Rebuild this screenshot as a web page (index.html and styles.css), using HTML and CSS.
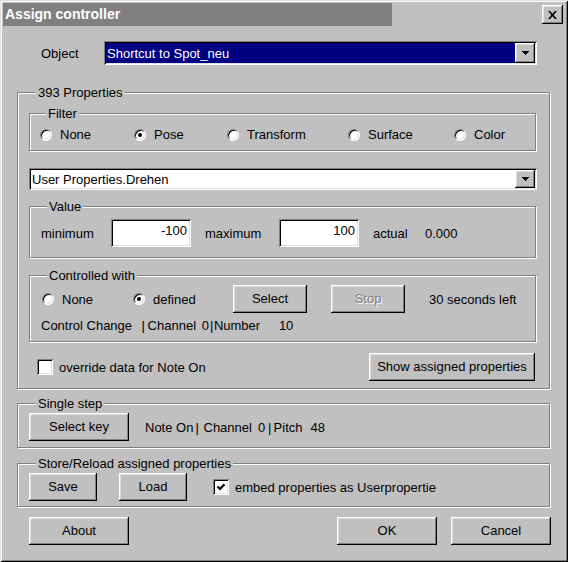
FILE: index.html
```html
<!DOCTYPE html>
<html lang="en">
<head>
<meta charset="utf-8">
<title>Assign controller</title>
<link rel="stylesheet" href="styles.css">
</head>
<body>
<div class="window">
  <div class="titlebar">
    <div class="title">Assign controller</div>
    <button class="close" type="button" aria-label="Close">
      <svg width="9" height="8" viewBox="0 0 9 8"><path d="M0 0H2L4.5 2.8L7 0H9L5.6 4L9 8H7L4.5 5.2L2 8H0L3.4 4Z"/></svg>
    </button>
  </div>
  <div class="content">
    <div class="object-row">
      <span class="object-label">Object</span>
      <div class="combo combo-object">
        <span class="combo-text selected">Shortcut to Spot_neu</span>
        <span class="drop"><svg width="7" height="4" viewBox="0 0 7 4"><path d="M0 0H7V1H6V2H5V3H4V4H3V3H2V2H1V1H0Z"/></svg></span>
      </div>
    </div>

    <div class="group props">
      <div class="legend">393 Properties</div>

      <div class="group sub filter">
        <div class="legend">Filter</div>
        <div class="filter-radios">
          <span class="radio"><span class="dot"></span>None</span>
          <span class="radio"><span class="dot on"></span>Pose</span>
          <span class="radio"><span class="dot"></span>Transform</span>
          <span class="radio"><span class="dot"></span>Surface</span>
          <span class="radio"><span class="dot"></span>Color</span>
        </div>
      </div>

      <div class="combo combo-user">
        <span class="combo-text">User Properties.Drehen</span>
        <span class="drop"><svg width="7" height="4" viewBox="0 0 7 4"><path d="M0 0H7V1H6V2H5V3H4V4H3V3H2V2H1V1H0Z"/></svg></span>
      </div>

      <div class="group sub value">
        <div class="legend">Value</div>
        <div class="value-row">
          <span>minimum</span>
          <span class="edit">-100</span>
          <span>maximum</span>
          <span class="edit">100</span>
          <span>actual</span>
          <span>0.000</span>
        </div>
      </div>

      <div class="group sub controlled">
        <div class="legend">Controlled with</div>
        <div class="ctrl-row">
          <span class="radio"><span class="dot"></span>None</span>
          <span class="radio"><span class="dot on"></span>defined</span>
          <span><button class="btn btn-sm" type="button">Select</button></span>
          <span><button class="btn btn-sm disabled" type="button" disabled>Stop</button></span>
          <span>30 seconds left</span>
        </div>
        <div class="info cc-info">
          <span>Control Change</span><span>|</span><span>Channel</span><span>0</span><span>|</span><span>Number</span><span>10</span>
        </div>
      </div>

      <div class="override-row">
        <span class="check"></span>
        <span class="check-label">override data for Note On</span>
        <button class="btn btn-show" type="button">Show assigned properties</button>
      </div>
    </div>

    <div class="group single">
      <div class="legend">Single step</div>
      <div class="single-row">
        <button class="btn btn-key" type="button">Select key</button>
        <div class="info note-info">
          <span>Note On</span><span>|</span><span>Channel</span><span>0</span><span>|</span><span>Pitch</span><span>48</span>
        </div>
      </div>
    </div>

    <div class="group store">
      <div class="legend">Store/Reload assigned properties</div>
      <div class="store-row">
        <button class="btn btn-save" type="button">Save</button>
        <button class="btn btn-load" type="button">Load</button>
        <span class="check"><svg width="10" height="10" viewBox="0 0 10 10"><polyline points="1.5,4.5 4,7 8.5,2.2" fill="none" stroke="#000" stroke-width="2.2"/></svg></span>
        <span class="check-label">embed properties as Userpropertie</span>
      </div>
    </div>

    <div class="bottom-row">
      <button class="btn" type="button">About</button>
      <button class="btn btn-ok" type="button">OK</button>
      <button class="btn btn-cancel" type="button">Cancel</button>
    </div>
  </div>
</div>
</body>
</html>
```

FILE: styles.css
```css
* { box-sizing: border-box; }
html, body { margin: 0; padding: 0; }
body {
  background: #c0c0c0;
  font-family: "Liberation Sans", Arial, sans-serif;
  font-size: 13px;
  line-height: 15px;
  color: #000;
}
button {
  font: inherit;
  color: inherit;
  border: 0;
  margin: 0;
  padding: 0;
  background: none;
}

.window {
  width: 568px;
  height: 562px;
  padding: 3px;
  background: #c0c0c0;
  box-shadow: inset 1px 1px 0 #dfdfdf, inset -1px -1px 0 #000, inset 2px 2px 0 #fff, inset -2px -2px 0 #808080;
  display: flex;
  flex-direction: column;
}

.titlebar { display: flex; height: 23px; flex: none; }
.title {
  width: 389px;
  background: #808080;
  color: #fff;
  font-weight: bold;
  font-size: 14px;
  padding: 4px 0 0 2px;
}
.close {
  margin: 2px 2px 0 auto;
  width: 21px;
  height: 19px;
  display: flex;
  align-items: center;
  justify-content: center;
}

.btn, .close, .drop {
  background: #c0c0c0;
  box-shadow: inset -1px -1px 0 #000, inset 1px 1px 0 #fff, inset -2px -2px 0 #808080, inset 2px 2px 0 #dfdfdf;
}
.btn { height: 28px; text-align: center; padding-bottom: 1px; }
.disabled { color: #808080; text-shadow: 1px 1px 0 #fff; }

.content { flex: 1; padding: 15px 15px 0 14px; }

.object-row { display: flex; align-items: center; height: 24px; }
.object-label { margin-left: 24px; width: 63px; }

.combo {
  display: flex;
  background: #fff;
  padding: 2px;
  box-shadow: inset 1px 1px 0 #808080, inset -1px -1px 0 #fff, inset 2px 2px 0 #000, inset -2px -2px 0 #dfdfdf;
}
.combo-object { width: 433px; height: 24px; }
.combo-user { height: 22px; margin-top: 17px; }
.combo-text { flex: 1; padding-left: 1px; display: flex; align-items: center; white-space: nowrap; }
.selected { background: #000080; color: #fff; }
.drop { width: 20px; flex: none; display: flex; align-items: center; justify-content: center; }

.group {
  border: 1px solid #808080;
  box-shadow: 1px 1px 0 #fff, inset 1px 1px 0 #fff;
}
.legend {
  width: max-content;
  margin: -8px 0 0 7px;
  padding: 0 2px;
  background: #c0c0c0;
}
.sub > .legend { margin-left: 6px; }

.props { margin-top: 27px; padding: 0 12px 7px 11px; }

.filter { margin: 13px 1px 0 0; padding: 0 0 8px 10px; }
.filter-radios {
  margin-top: 6px;
  display: grid;
  grid-template-columns: 94px 93px 121px 106px auto;
  align-items: center;
  height: 15px;
}

.radio { display: flex; align-items: center; gap: 8px; white-space: nowrap; }
.dot {
  position: relative;
  flex: none;
  width: 12px;
  height: 12px;
  border-radius: 50%;
  background: #fff;
  border: 1px solid;
  border-color: #808080 #fff #fff #808080;
  box-shadow: inset 1px 1px 0 #000, inset -1px -1px 0 #dfdfdf;
}
.dot.on::after {
  content: "";
  position: absolute;
  left: 3px;
  top: 3px;
  width: 4px;
  height: 4px;
  border-radius: 50%;
  background: #000;
}

.value { margin: 16px 1px 0 0; padding: 0 0 10px 11px; }
.value-row {
  margin-top: 5px;
  display: grid;
  grid-template-columns: 70px 94px 74px 94px 52px auto;
  align-items: center;
  height: 28px;
}
.edit {
  width: 80px;
  height: 28px;
  background: #fff;
  text-align: right;
  padding: 4px 4px 0 0;
  box-shadow: inset 1px 1px 0 #808080, inset -1px -1px 0 #fff, inset 2px 2px 0 #000, inset -2px -2px 0 #dfdfdf;
}

.controlled { margin: 17px 1px 0 0; padding: 0 0 8px 11px; }
.ctrl-row {
  margin-top: 2px;
  padding-left: 1px;
  display: grid;
  grid-template-columns: 91px 100px 98px 98px auto;
  align-items: center;
  height: 28px;
}
.btn-sm { width: 74px; display: block; }

.info { display: flex; white-space: pre; }
.info > span { flex: none; }
.cc-info { margin-top: 5px; }
.cc-info > span:nth-child(1) { width: 100.6px; }
.cc-info > span:nth-child(2) { width: 6px; }
.cc-info > span:nth-child(3) { width: 54.1px; }
.cc-info > span:nth-child(4) { width: 8.2px; }
.cc-info > span:nth-child(5) { width: 4px; }
.cc-info > span:nth-child(6) { width: 65px; }

.override-row { display: flex; align-items: center; height: 28px; margin-top: 11px; }
.check {
  flex: none;
  width: 16px;
  height: 16px;
  background: #fff;
  display: flex;
  align-items: center;
  justify-content: center;
  box-shadow: inset 1px 1px 0 #808080, inset -1px -1px 0 #fff, inset 2px 2px 0 #000, inset -2px -2px 0 #dfdfdf;
}
.override-row .check { margin-left: 8px; }
.check-label { margin-left: 6px; white-space: nowrap; }
.btn-show { margin: 0 2px 0 auto; width: 166px; }

.single { margin-top: 14px; padding: 0 0 6px 11px; }
.single-row { margin-top: 2px; display: flex; align-items: center; }
.btn-key { width: 100px; }
.note-info { margin-left: 16px; }
.note-info > span:nth-child(1) { width: 50.5px; }
.note-info > span:nth-child(2) { width: 8px; }
.note-info > span:nth-child(3) { width: 54.5px; }
.note-info > span:nth-child(4) { width: 10px; }
.note-info > span:nth-child(5) { width: 5.6px; }
.note-info > span:nth-child(6) { width: 37px; }

.store { margin-top: 15px; padding: 0 0 5px 11px; }
.store-row { margin-top: 2px; display: flex; align-items: center; }
.btn-save, .btn-load { width: 68px; }
.btn-load { margin-left: 22px; }
.store-row .check { margin-left: 26px; }

.bottom-row { margin: 10px -1px 0 0; padding-left: 12px; display: flex; }
.bottom-row .btn { width: 100px; }
.btn-ok { margin-left: auto; }
.btn-cancel { margin-left: 14px; }
```
